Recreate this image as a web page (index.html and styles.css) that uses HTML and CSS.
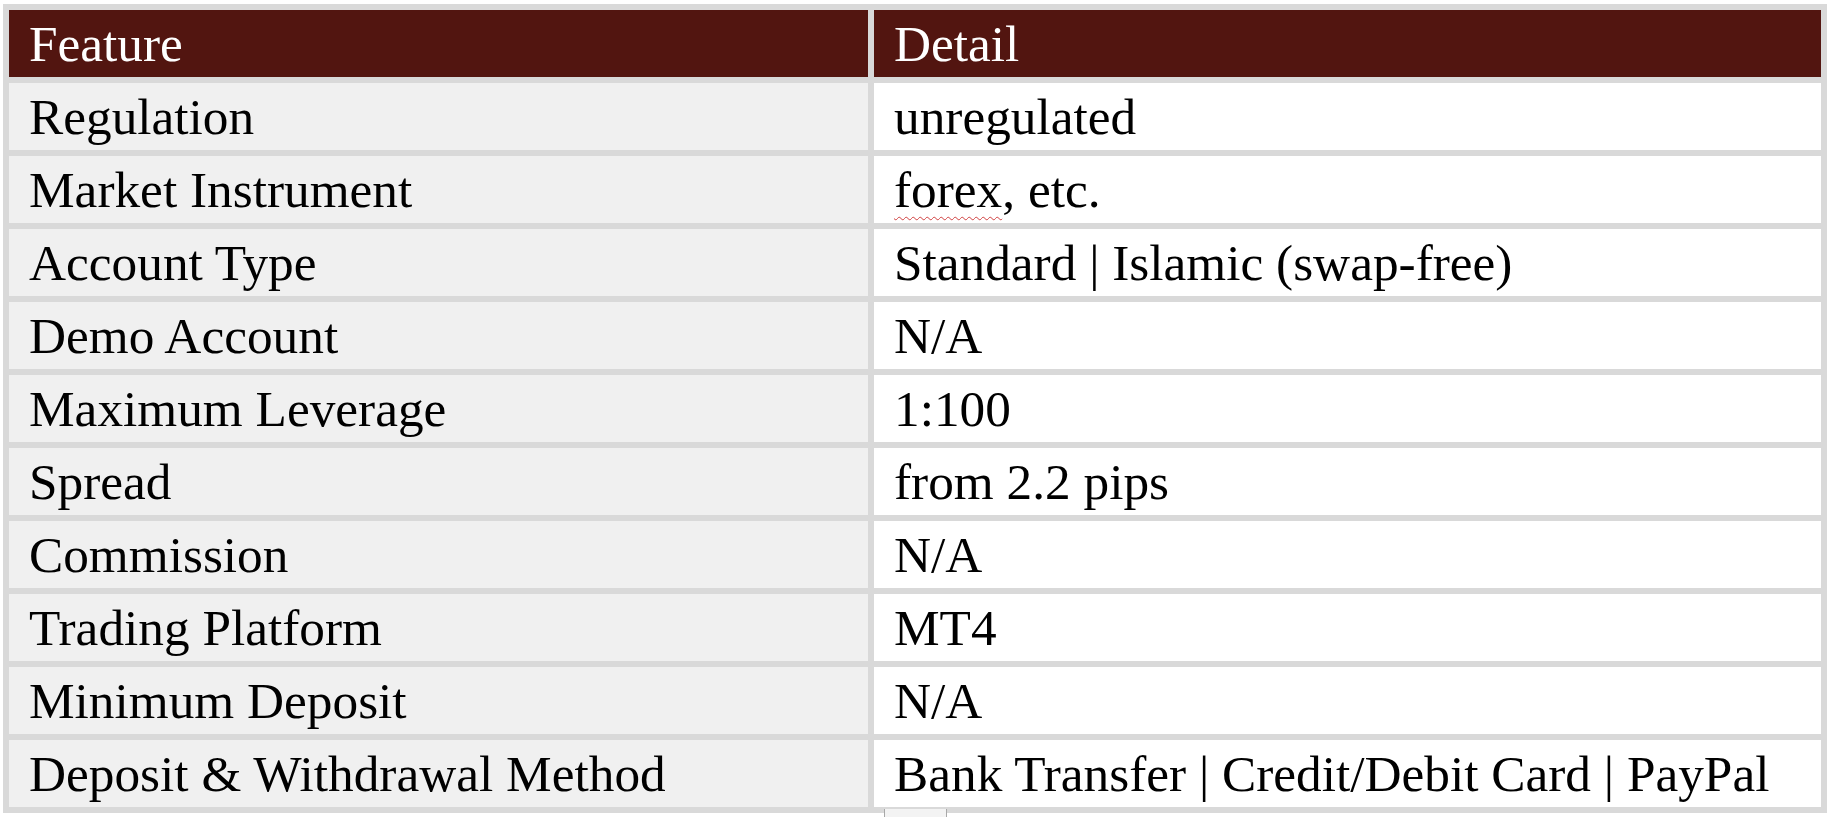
FILE: index.html
```html
<!DOCTYPE html>
<html>
<head>
<meta charset="utf-8">
<title>Broker overview</title>
<link rel="stylesheet" href="styles.css">
</head>
<body>
<table class="info">
  <thead>
    <tr><th class="c1">Feature</th><th class="c2">Detail</th></tr>
  </thead>
  <tbody>
    <tr><td class="c1">Regulation</td><td class="c2">unregulated</td></tr>
    <tr><td class="c1">Market Instrument</td><td class="c2"><span class="spell">forex</span>, etc.</td></tr>
    <tr><td class="c1">Account Type</td><td class="c2">Standard | Islamic (swap-free)</td></tr>
    <tr><td class="c1">Demo Account</td><td class="c2">N/A</td></tr>
    <tr><td class="c1">Maximum Leverage</td><td class="c2">1:100</td></tr>
    <tr><td class="c1">Spread</td><td class="c2">from 2.2 pips</td></tr>
    <tr><td class="c1">Commission</td><td class="c2">N/A</td></tr>
    <tr><td class="c1">Trading Platform</td><td class="c2">MT4</td></tr>
    <tr><td class="c1">Minimum Deposit</td><td class="c2">N/A</td></tr>
    <tr><td class="c1">Deposit &amp; Withdrawal Method</td><td class="c2">Bank Transfer | Credit/Debit Card | PayPal</td></tr>
  </tbody>
</table>
<div class="handle"></div>
</body>
</html>
```
FILE: styles.css
```css
html, body {
  margin: 0;
  padding: 0;
  background: #ffffff;
}
body {
  padding-top: 4px;
  font-family: "Liberation Serif", "Times New Roman", serif;
}
.info {
  margin-left: 3px;
  border-collapse: separate;
  border-spacing: 6px;
  background: #d9d9d9;
  table-layout: fixed;
  width: 1824px;
}
.info th, .info td {
  height: 67px;
  padding: 1px 0 0 20px;
  font-size: 51.3px;
  line-height: 66px;
  font-weight: normal;
  text-align: left;
  vertical-align: middle;
  white-space: nowrap;
  color: #000000;
  box-sizing: border-box;
}
.info th {
  background: #521510;
  color: #ffffff;
}
.info .c1 { width: 859px; }
.info .c2 { width: 947px; }
.info td.c1 { background: #f0f0f0; }
.info td.c2 { background: #ffffff; }
.spell {
  text-decoration: underline wavy #d04040;
  text-decoration-thickness: 1px;
  text-underline-offset: 9px;
}
.handle {
  margin-left: 884px;
  margin-top: -4px;
  width: 61px;
  height: 8px;
  background: #f3f3f3;
  border-left: 1px solid #a8a8a8;
  border-right: 1px solid #a8a8a8;
}
```
